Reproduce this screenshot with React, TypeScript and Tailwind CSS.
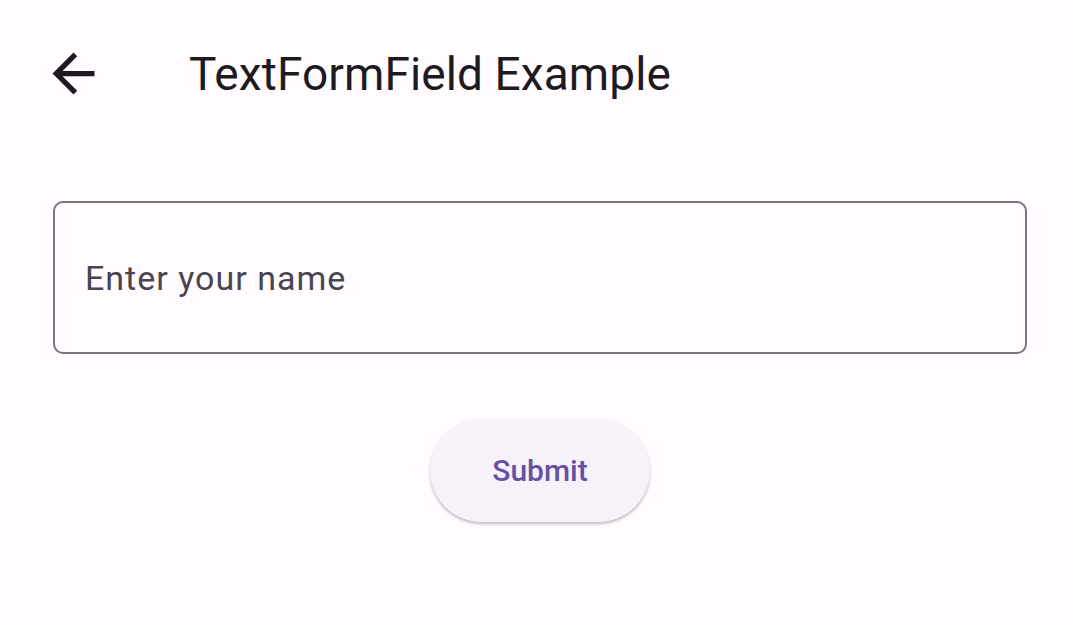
export default function App() {
  return (
    <div className="w-[1080px] h-[635px] bg-[#FFFBFE] overflow-hidden" style={{ fontFamily: "Roboto, 'Noto Sans', sans-serif" }}>
      <div className="h-[147px] flex items-center">
        <div className="w-[63px] h-[63px] ml-[42px] flex items-center justify-center">
          <svg viewBox="0 0 24 24" width="63" height="63" fill="#1D1B20">
            <path d="M20 11H7.83l5.59-5.59L12 4l-8 8 8 8 1.41-1.41L7.83 13H20v-2z" />
          </svg>
        </div>
        <div className="ml-[84px] text-[46px] tracking-[0.1px] leading-none text-[#1D1B20]">TextFormField Example</div>
      </div>
      <div className="px-[53px] pt-[54px]">
        <div className="h-[153px] border-2 border-[#79747E] rounded-[10px] flex items-center pl-[30px]">
          <span className="text-[34px] tracking-[1px] text-[#49454F] leading-none">Enter your name</span>
        </div>
        <div className="flex justify-center mt-[65px]">
          <button className="w-[220px] h-[103px] rounded-full bg-[#F7F2FA] text-[#6750A4] text-[30px] font-medium shadow-[0_2px_3px_rgba(0,0,0,0.25)]">
            Submit
          </button>
        </div>
      </div>
    </div>
  );
}
